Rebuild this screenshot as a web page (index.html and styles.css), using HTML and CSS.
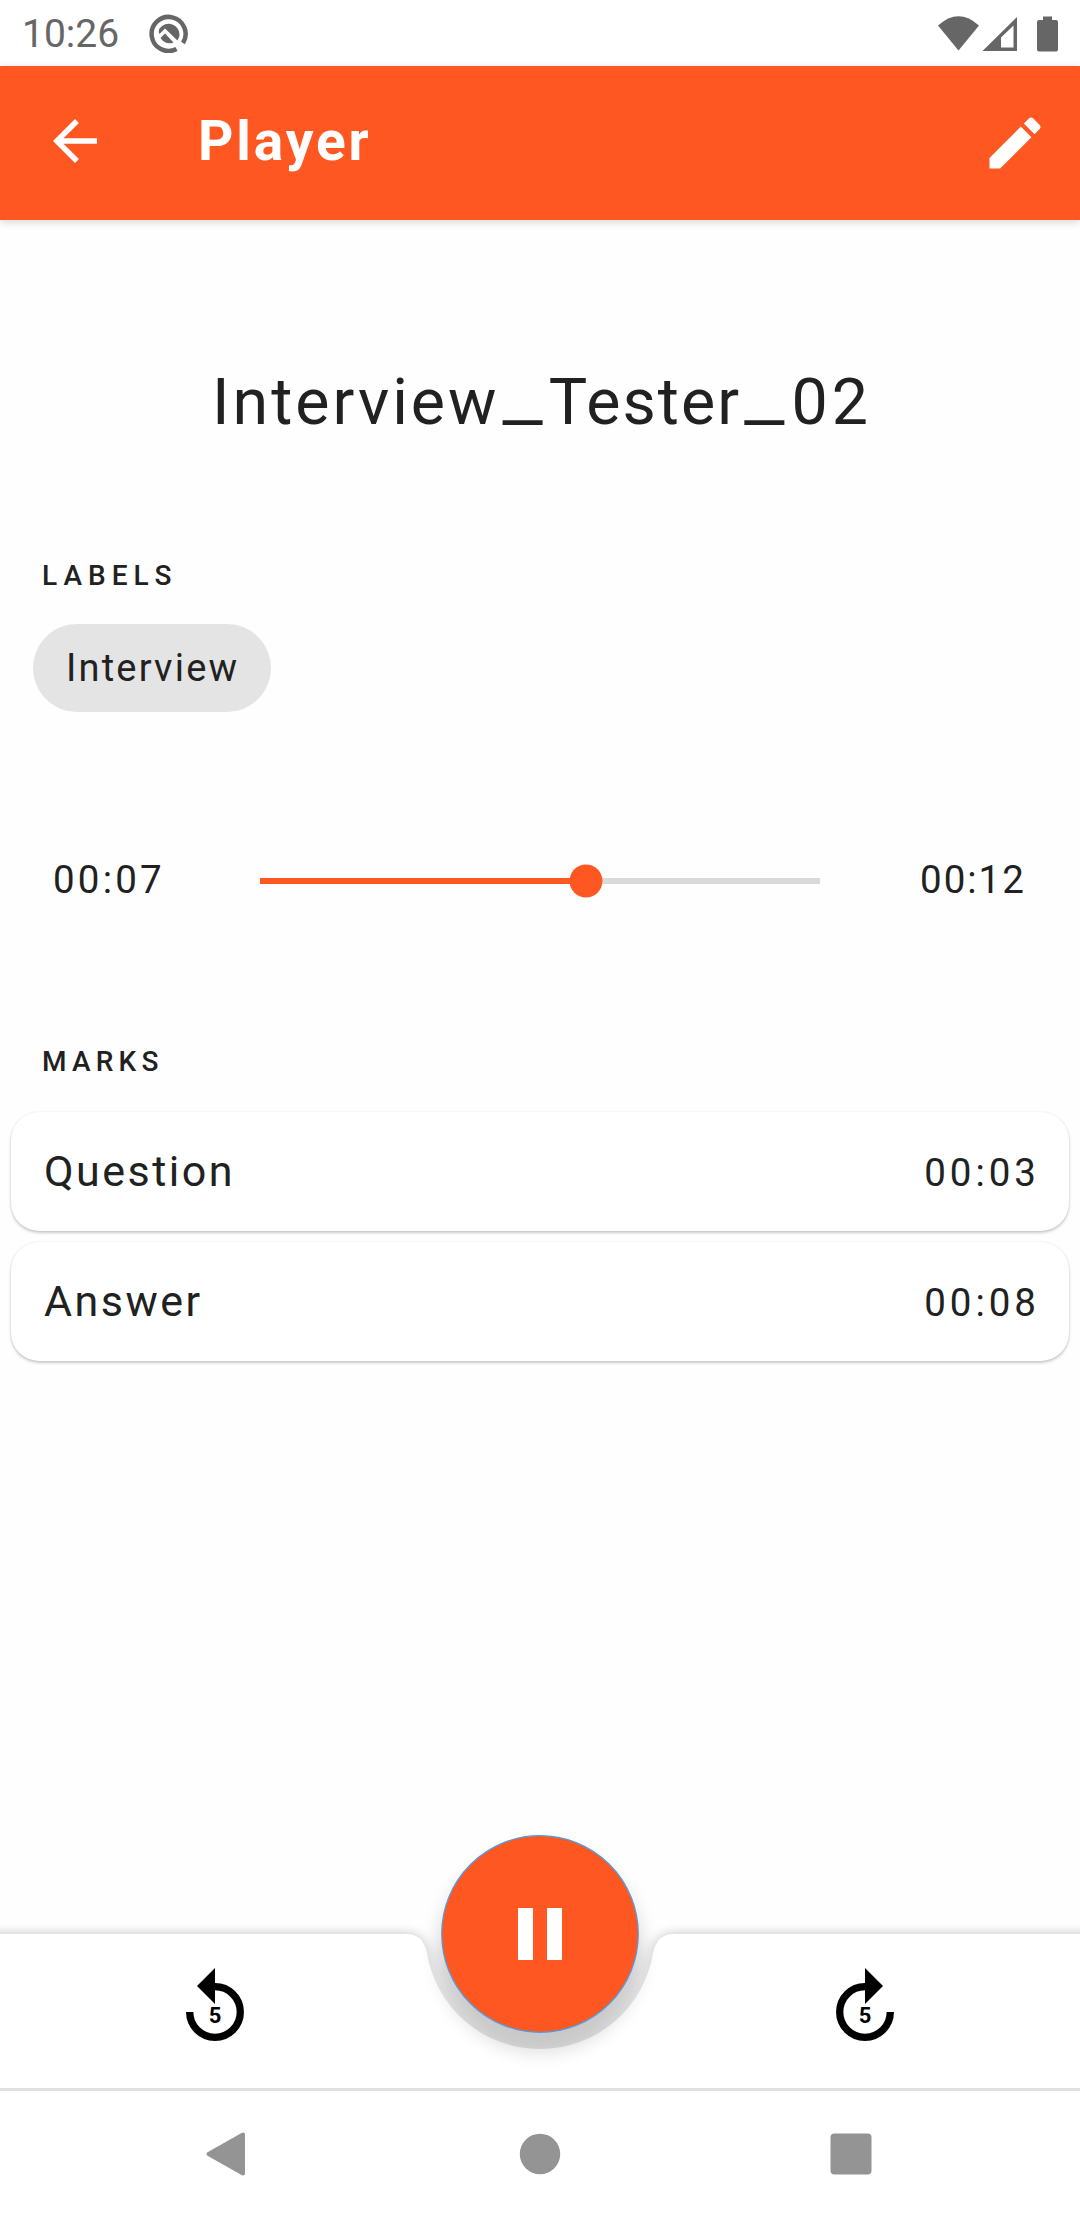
FILE: index.html
```html
<!DOCTYPE html>
<html lang="en">
<head>
<meta charset="utf-8">
<title>Player</title>
<link rel="stylesheet" href="styles.css">
</head>
<body>
<div class="screen">
  <div class="status-bar">
    <span class="clock">10:26</span>
    <svg class="q-icon" width="40" height="40" viewBox="0 0 40 40">
      <path d="M27.500 36 A17 17 0 1 1 34 30" fill="none" stroke="#666" stroke-width="4.500"/>
      <path d="M10.500 15.500 A11 11 0 0 1 30.500 23 L28.500 27.500 L16 15.500 L10.500 21 C9.500 19 9.500 17.500 10.500 15.500Z" fill="#666"/>
      <path d="M11.500 25 L16 20.500 L24.500 29.500 C20 31.500 14.500 30 11.500 25Z" fill="#666"/>
      <path d="M28 29 L34.500 36" stroke="#fff" stroke-width="3"/>
    </svg>
    <svg class="system-icons" width="122" height="38" viewBox="0 0 122 38" fill="#666">
      <path d="M0 10.500 Q20.500 -8 41 10.500 L20.500 35.500Z"/>
      <path fill-rule="evenodd" d="M79 2 V36 H44.500Z M75.500 10.500 L63 22.500 V32.500 H75.500Z"/>
      <path d="M105 1.500 H114 V5 H118 Q120 5 120 7 V34.500 Q120 36.500 118 36.500 H101 Q99 36.500 99 34.500 V7 Q99 5 101 5 H105Z"/>
    </svg>
  </div>
  <header class="app-bar">
    <svg class="back" width="66" height="66" viewBox="0 0 24 24"><path fill="#fff" d="M20 11H7.830l5.590-5.590L12 4l-8 8 8 8 1.410-1.410L7.830 13H20v-2z"/></svg>
    <h1 class="app-title">Player</h1>
    <svg class="edit" width="68" height="68" viewBox="0 0 24 24"><path fill="#fff" d="M3 17.250V21h3.750L17.810 9.940l-3.750-3.750L3 17.250zM20.710 7.040c.39-.39.39-1.020 0-1.410l-2.340-2.340c-.39-.39-1.020-.39-1.410 0l-1.830 1.830 3.750 3.750 1.830-1.830z"/></svg>
  </header>
  <main class="content">
    <h2 class="recording-title"><span class="part-name">Interview</span><span class="underscore">_</span><span class="part-person">Tester</span><span class="underscore">_</span><span class="part-number">02</span></h2>
    <h3 class="section-label">LABELS</h3>
    <span class="chip">Interview</span>
    <div class="progress">
      <span class="time">00:07</span>
      <svg class="slider" width="560" height="34" viewBox="0 0 560 34">
        <path d="M0 14H560V20H0Z" fill="#dadada"/>
        <path d="M0 14H326V20H0Z" fill="#ff5722"/>
        <circle cx="326" cy="17" r="16.500" fill="#ff5722"/>
      </svg>
      <span class="time end">00:12</span>
    </div>
    <h3 class="section-label marks">MARKS</h3>
    <ul class="mark-list">
      <li class="mark"><span class="mark-name">Question</span><span class="mark-time">00:03</span></li>
      <li class="mark"><span class="mark-name">Answer</span><span class="mark-time">00:08</span></li>
    </ul>
  </main>
  <footer class="player-bar">
    <svg class="bar-shape" width="1080" height="264" viewBox="0 0 1080 264">
      <defs>
        <filter id="bar-shadow" x="-40" y="60" width="1160" height="210" filterUnits="userSpaceOnUse"><feGaussianBlur stdDeviation="6"/></filter>
        <filter id="fab-shadow" x="400" y="-20" width="280" height="300" filterUnits="userSpaceOnUse"><feGaussianBlur stdDeviation="9"/></filter>
        <linearGradient id="notch-shade" x1="0" y1="110" x2="0" y2="225" gradientUnits="userSpaceOnUse"><stop offset="0" stop-color="#e8e8e8" stop-opacity="0"/><stop offset=".35" stop-color="#e8e8e8" stop-opacity=".8"/><stop offset="1" stop-color="#e2e2e2"/></linearGradient>
      </defs>
      <path d="M-30 110H407Q423 110 427 129A114.500 114.500 0 0 0 653 129Q657 110 673 110H1110V300H-30Z" fill="#000" opacity=".24" filter="url(#bar-shadow)"/>
      <path d="M407 110Q423 110 427 129A114.500 114.500 0 0 0 653 129Q657 110 673 110Z" fill="url(#notch-shade)"/>
      <path d="M0 110H407Q423 110 427 129A114.500 114.500 0 0 0 653 129Q657 110 673 110H1080V264H0Z" fill="#fff"/>
      <circle cx="540" cy="126" r="103" fill="#000" opacity=".12" filter="url(#fab-shadow)"/>
      <circle cx="540" cy="110" r="98.300" fill="#ff5722" stroke="#4f9de0" stroke-width="1.200"/>
      <path d="M518 84H533V136H518ZM547 84H562V136H547Z" fill="#fff"/>
    </svg>
    <svg class="skip" width="70" height="80" viewBox="-35 -47 70 80">
      <path d="M-25.300 0A25.300 25.300 0 1 0 0 -25.300" fill="none" stroke="#000" stroke-width="7.300"/>
      <path d="M0 -44V-8L-18 -26Z"/>
      <text class="skip-count" x="0" y="10.500">5</text>
    </svg>
    <svg class="skip" width="70" height="80" viewBox="-35 -47 70 80">
      <path d="M25.300 0A25.300 25.300 0 1 1 0 -25.300" fill="none" stroke="#000" stroke-width="7.300"/>
      <path d="M0 -44V-8L18 -26Z"/>
      <text class="skip-count" x="0" y="10.500">5</text>
    </svg>
  </footer>
  <nav class="nav-bar">
    <svg width="46" height="46" viewBox="0 0 46 46"><path d="M39 3.500V42.500L4.500 23Z" fill="#949494" stroke="#949494" stroke-width="4" stroke-linejoin="round"/></svg>
    <svg width="46" height="46" viewBox="0 0 46 46"><circle cx="24" cy="23" r="20.200" fill="#949494"/></svg>
    <svg width="46" height="46" viewBox="0 0 46 46"><rect x="2.500" y="2.500" width="41" height="41" rx="4" fill="#949494"/></svg>
  </nav>
</div>
</body>
</html>
```
FILE: styles.css
```css
* { box-sizing: border-box; }
body {
  margin: 0;
  background: #fefefe;
  color: #212121;
  font-family: Roboto, sans-serif;
}
svg { display: block; flex: none; }
h1, h2, h3, ul { margin: 0; padding: 0; font-weight: 400; }
.screen {
  width: 1080px;
  height: 2220px;
  display: flex;
  flex-direction: column;
  overflow: hidden;
}
.status-bar {
  height: 66px;
  flex: none;
  display: flex;
  align-items: center;
  padding: 2px 20px 0 22px;
  background: #fff;
}
.clock { width: 127px; font-size: 39px; line-height: 46px; color: #666; }
.q-icon { margin-top: -3px; }
.system-icons { margin-left: auto; }
.app-bar {
  height: 154px;
  flex: none;
  display: flex;
  align-items: center;
  padding: 0 31px 0 42px;
  background: #ff5722;
  box-shadow: 0 2px 8px rgba(0, 0, 0, .16);
}
.back { margin-top: -4px; }
.app-title {
  margin: -4px 0 0 90px;
  font-size: 55px;
  font-weight: 700;
  line-height: 66px;
  letter-spacing: 2.900px;
  color: #fff;
}
.edit { margin-left: auto; }
.content {
  flex: 1;
  display: flex;
  flex-direction: column;
  align-items: flex-start;
}
.recording-title {
  margin-top: 142px;
  padding-left: 212px;
  height: 80px;
  font-size: 64.500px;
  line-height: 80px;
  white-space: nowrap;
}
.part-name { letter-spacing: 3px; }
.part-person { margin-left: 6px; letter-spacing: 2.100px; }
.part-number { margin-left: 7px; letter-spacing: 4px; }
.underscore { font-size: 93px; font-weight: 300; line-height: 0; vertical-align: 4px; margin-left: 3px; }
.section-label {
  margin: 118px 0 0 42px;
  font-size: 28px;
  font-weight: 500;
  line-height: 32px;
  letter-spacing: 6px;
}
.chip {
  width: 238px;
  height: 88px;
  margin: 32px 0 0 33px;
  padding-left: 33px;
  border-radius: 44px;
  background: #e4e4e4;
  font-size: 38px;
  line-height: 88px;
  letter-spacing: 2.200px;
}
.progress {
  width: 1080px;
  height: 50px;
  margin-top: 144px;
  padding-left: 53px;
  display: flex;
  align-items: center;
}
.time { width: 207px; margin-top: -3px; font-size: 38.500px; letter-spacing: 3.200px; }
.time.end { width: auto; margin-left: 100px; letter-spacing: 2px; }
.section-label.marks { margin-top: 140px; letter-spacing: 5.200px; }
.mark-list {
  width: 1080px;
  margin-top: 34px;
  padding: 0 11px;
  display: flex;
  flex-direction: column;
  gap: 11px;
  list-style: none;
}
.mark {
  height: 119px;
  padding: 0 29px 0 33px;
  display: flex;
  align-items: center;
  justify-content: space-between;
  border-radius: 28px;
  background: #fff;
  box-shadow: 0 2px 3px rgba(0, 0, 0, .2), 0 0 2px rgba(0, 0, 0, .1);
}
.mark-name { margin-top: -2px; font-size: 43px; letter-spacing: 2.500px; }
.mark-time { margin-top: 2px; font-size: 38.500px; letter-spacing: 4px; }
.player-bar {
  position: relative;
  height: 154px;
  flex: none;
  display: flex;
  justify-content: space-between;
  padding: 31px 180px 0;
}
.bar-shape { position: absolute; left: 0; bottom: 0; }
.skip { position: relative; }
.skip-count { font-size: 22px; font-weight: 700; text-anchor: middle; }
.nav-bar {
  height: 132px;
  flex: none;
  display: flex;
  justify-content: space-between;
  padding: 40px 206px 0 204px;
  border-top: 3px solid #e0e0e0;
  background: #fff;
}
```
